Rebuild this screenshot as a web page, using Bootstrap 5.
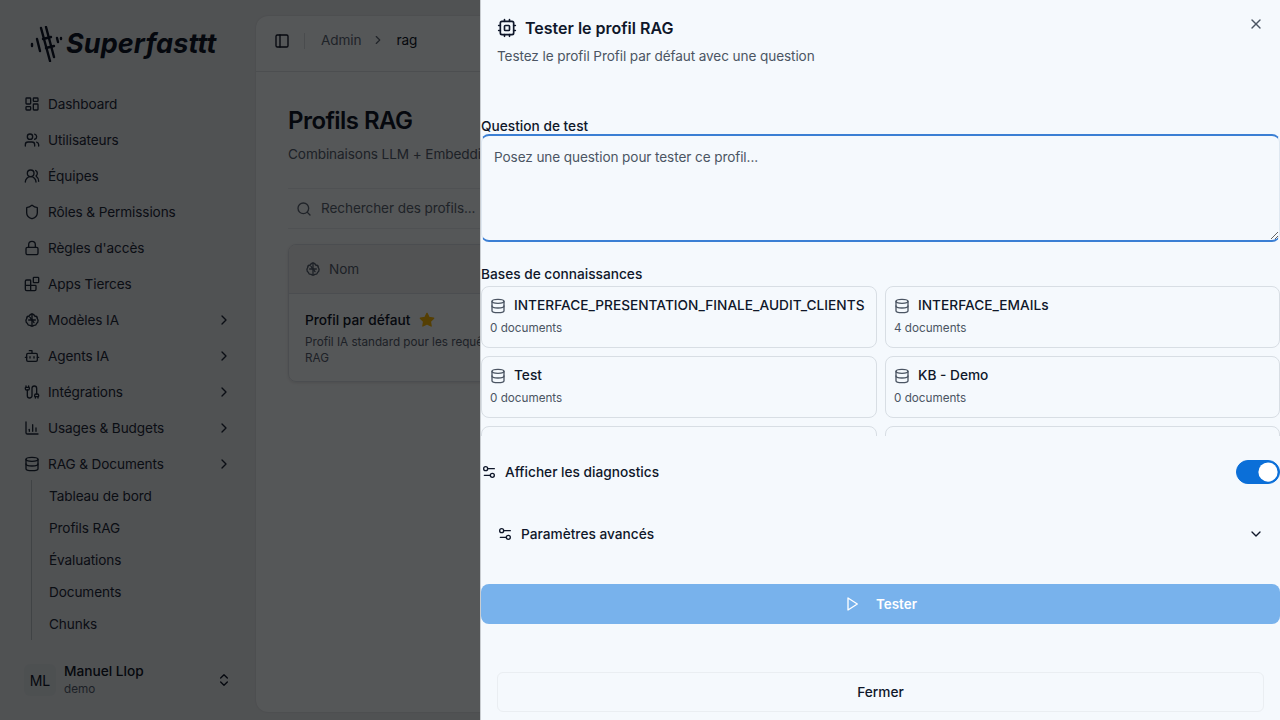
<!DOCTYPE html>
<html lang="fr">

<head>
  <meta charset="UTF-8">
  <title>Profils RAG</title>
  <link href="https://cdn.jsdelivr.net/npm/bootstrap@5.3.2/dist/css/bootstrap.min.css" rel="stylesheet">
  <style>
    body { font-family: Inter, "Liberation Sans", sans-serif; font-size: 13.6px; letter-spacing: -.1px; color: #0f172a; background: #e6ebef; height: 720px; overflow: hidden; }
    .ico { width: 16px; height: 16px; fill: none; stroke: currentColor; stroke-width: 2; stroke-linecap: round; stroke-linejoin: round; flex-shrink: 0; }
    .ico-14 { width: 14px; height: 14px; }
    .ico-20 { width: 20px; height: 20px; }
    .dim { position: fixed; inset: 0; z-index: 1040; background: rgba(0, 0, 0, .3); backdrop-filter: blur(.5px); }

    /* sidebar */
    .sidebar { width: 256px; height: 720px; padding: 0 24px; }
    .logo { height: 86px; padding-top: 26px; margin-left: 5px; gap: 3px; }
    .logo-mark { width: 34px; height: 36px; fill: none; stroke: #0f172a; stroke-width: 2.4; stroke-linecap: round; }
    .logo-text { font-size: 27px; font-weight: 700; font-style: italic; line-height: 36px; letter-spacing: .1px; }
    .side-link { height: 36px; gap: 8px; color: #1e293b; text-decoration: none; }
    .side-link .chev { margin-left: auto; }
    .side-sub { border-left: 1px solid #b9c0c7; margin-left: 7px; margin-top: -2px; padding-left: 17px; height: 160px; }
    .side-sub a { height: 32px; color: #1e293b; text-decoration: none; }
    .side-user { margin-top: 22px; gap: 8px; }
    .avatar { width: 32px; height: 32px; background: #dfe5ea; border-radius: 6px; font-size: 14px; }
    .side-user .name { font-size: 13.7px; letter-spacing: 0; font-weight: 500; line-height: 18px; }
    .side-user .role { font-size: 11.7px; letter-spacing: 0; color: #556070; line-height: 18px; }

    /* main panel behind the drawer */
    .main-panel { width: 1024px; height: 696px; margin-top: 16px; background: #f5f9fc; border-radius: 12px 0 0 12px; box-shadow: 0 0 2px rgba(0, 0, 0, .12); }
    .top-bar { height: 56px; padding: 0 18px 6px; border-bottom: 1px solid #dbe1e7; gap: 14px; }
    .top-bar .sep { width: 1px; height: 16px; background: #d5dbe1; }
    .crumbs { gap: 10px; margin-left: 2px; color: #5b6675; }
    .crumbs .here { color: #0f172a; margin-left: 1px; }
    .page { padding: 33px 32px; }
    .page h1 { font-size: 24px; font-weight: 600; line-height: 32px; letter-spacing: -.55px; margin: 0; }
    .page .lead-txt { color: #556070; margin: 7px 0 0; line-height: 20px; }
    .search-box { height: 41px; margin-top: 24px; padding-left: 8px; gap: 9px; color: #5b6675; border-top: 1px solid #e4e9ee; border-bottom: 1px solid #e4e9ee; }
    .table-card { margin-top: 15px; width: 400px; height: 138px; border: 1px solid #d9dfe5; border-radius: 8px; box-shadow: 0 1px 3px rgba(0, 0, 0, .1); overflow: hidden; }
    .table-head { height: 49px; padding: 0 16px; gap: 8px; background: #eceff2; border-bottom: 1px solid #d9dfe5; color: #556070; }
    .table-row { padding: 16px; }
    .table-row .nm { font-size: 13.7px; letter-spacing: 0; font-weight: 500; line-height: 20px; gap: 9px; }
    .table-row .star { fill: #f5b60a; stroke: #f5b60a; }
    .table-row .dsc { font-size: 11.7px; letter-spacing: 0; line-height: 16px; color: #556070; margin-top: 4px; width: 196px; }

    /* drawer */
    .drawer.offcanvas { width: 800px; background: #f5f9fd; border-left: 1px solid #c9cdd1; color: #0f172a; overflow: hidden; }
    .drawer-head { padding: 16px; height: 82px; }
    .drawer-title { font-size: 16px; font-weight: 600; letter-spacing: 0; line-height: 24px; gap: 8px; }
    .drawer-sub { color: #4b5563; line-height: 20px; margin-top: 6px; }
    .drawer .close-x { top: 16px; right: 16px; color: #4b5563; background: none; border: 0; padding: 0; line-height: 0; }
    .fld-label { font-size: 13.7px; letter-spacing: 0; font-weight: 500; line-height: 17px; margin: 0; display: block; }
    .first-label { margin-top: 36px; line-height: 16px; }
    .drawer textarea.form-control { height: 108px; font-size: 13.6px; letter-spacing: -.1px; line-height: 20px; padding: 11px 12px; background: #f5f9fd; border: 2px solid #3b7fd4; border-left: 1px solid #dfe8f1; border-right: 1px solid #dfe8f1; border-radius: 8px; box-shadow: none; color: #0f172a; }
    .drawer textarea.form-control::placeholder { color: #4b5563; opacity: 1; }
    .second-label { margin-top: 24px; }
    .kb-wrap { height: 150px; margin-top: 3px; overflow: hidden; display: grid; grid-template-columns: 396px 395px; gap: 8px; }
    .kb-card { height: 62px; padding: 10px 8px; background: #f5f9fd; border: 1px solid #d8dee4; border-radius: 8px; }
    .kb-card .kb-t { font-size: 13.7px; letter-spacing: 0; font-weight: 500; line-height: 17px; gap: 8px; }
    .kb-card .kb-t .ico { color: #4b5563; }
    .kb-card .kb-d { font-size: 11.7px; letter-spacing: 0; line-height: 16px; color: #4b5563; margin-top: 6px; }
    .diag-row { font-size: 13.7px; letter-spacing: 0; height: 24px; margin-top: 24px; gap: 8px; font-weight: 500; }
    .diag-row .form-switch { margin: 0 0 0 auto; padding: 0; min-height: 0; line-height: 0; }
    .diag-row .form-check-input { width: 44px; height: 24px; margin: 0; background-color: #0b6fd8; border-color: #0b6fd8; box-shadow: none; background-image: url("data:image/svg+xml,%3csvg xmlns='http://www.w3.org/2000/svg' viewBox='-4 -4 8 8'%3e%3ccircle r='3.5' fill='%23fff'/%3e%3c/svg%3e"); }
    .adv-row { font-size: 13.7px; letter-spacing: 0; height: 40px; margin-top: 30px; padding: 0 16px; gap: 8px; font-weight: 500; }
    .btn-test.btn { height: 40px; margin-top: 30px; width: 799px; font-size: 13.4px; letter-spacing: 0; font-weight: 600; gap: 16px; color: #fff; background: #78b2ec; border: 0; border-radius: 8px; opacity: 1; }
    .drawer-foot { margin-top: 48px; padding: 0 16px; }
    .btn-close-foot.btn { height: 40px; width: 100%; font-size: 13.7px; letter-spacing: 0; font-weight: 500; color: #0f172a; background: #f5f9fd; border: 1px solid #eaeef2; border-radius: 6px; }
  </style>
</head>

<body>
  <svg class="d-none">
    <symbol id="i-dash" viewBox="0 0 24 24"><rect x="3" y="3" width="7" height="9" rx="1"/><rect x="14" y="3" width="7" height="5" rx="1"/><rect x="14" y="12" width="7" height="9" rx="1"/><rect x="3" y="16" width="7" height="5" rx="1"/></symbol>
    <symbol id="i-users" viewBox="0 0 24 24"><path d="M16 21v-2a4 4 0 0 0-4-4H6a4 4 0 0 0-4 4v2"/><circle cx="9" cy="7" r="4"/><path d="M22 21v-2a4 4 0 0 0-3-3.87"/><path d="M16 3.13a4 4 0 0 1 0 7.75"/></symbol>
    <symbol id="i-team" viewBox="0 0 24 24"><path d="M18 21a8 8 0 0 0-16 0"/><circle cx="10" cy="8" r="5"/><path d="M22 20c0-3.37-2-6.5-4-8a5 5 0 0 0-.45-8.3"/></symbol>
    <symbol id="i-shield" viewBox="0 0 24 24"><path d="M20 13c0 5-3.5 7.5-7.66 8.95a1 1 0 0 1-.67-.01C7.5 20.5 4 18 4 13V6a1 1 0 0 1 1-1c2 0 4.5-1.2 6.24-2.72a1.17 1.17 0 0 1 1.52 0C14.51 3.81 17 5 19 5a1 1 0 0 1 1 1z"/></symbol>
    <symbol id="i-lock" viewBox="0 0 24 24"><rect x="3" y="11" width="18" height="11" rx="2"/><path d="M7 11V7a5 5 0 0 1 10 0v4"/></symbol>
    <symbol id="i-blocks" viewBox="0 0 24 24"><path d="M10 22V7a1 1 0 0 0-1-1H4a2 2 0 0 0-2 2v12a2 2 0 0 0 2 2h12a2 2 0 0 0 2-2v-5a1 1 0 0 0-1-1H2"/><rect x="14" y="2" width="8" height="8" rx="1"/></symbol>
    <symbol id="i-brain" viewBox="0 0 24 24"><path d="M12 3v18"/><path d="M12 3a4 4 0 0 0-4 3 4 4 0 0 0-4 4 4 4 0 0 0-1 3 4 4 0 0 0 2 4 4 4 0 0 0 4 3 4 4 0 0 0 3 1 4 4 0 0 0 3-1 4 4 0 0 0 4-3 4 4 0 0 0 2-4 4 4 0 0 0-1-3 4 4 0 0 0-4-4 4 4 0 0 0-4-3z"/><path d="M7 12h5l-3-4"/><path d="M17 12h-5l3 4"/></symbol>
    <symbol id="i-bot" viewBox="0 0 24 24"><path d="M12 8V4H8"/><rect x="4" y="8" width="16" height="12" rx="2"/><path d="M2 14h2"/><path d="M20 14h2"/><path d="M15 13v2"/><path d="M9 13v2"/></symbol>
    <symbol id="i-cable" viewBox="0 0 24 24"><path d="M17 21v-2a1 1 0 0 1-1-1v-1a2 2 0 0 1 2-2h2a2 2 0 0 1 2 2v1a1 1 0 0 1-1 1"/><path d="M19 15V6.5a1 1 0 0 0-7 0v11a1 1 0 0 1-7 0V9"/><path d="M21 21v-2h-4"/><path d="M3 5h4V3"/><path d="M7 5a1 1 0 0 1 1 1v1a2 2 0 0 1-2 2H4a2 2 0 0 1-2-2V6a1 1 0 0 1 1-1V3"/></symbol>
    <symbol id="i-chart" viewBox="0 0 24 24"><path d="M3 3v16a2 2 0 0 0 2 2h16"/><path d="M18 17v-5"/><path d="M13 17V7"/><path d="M8 17v-3"/></symbol>
    <symbol id="i-db" viewBox="0 0 24 24"><ellipse cx="12" cy="5" rx="9" ry="3"/><path d="M3 5V19A9 3 0 0 0 21 19V5"/><path d="M3 12A9 3 0 0 0 21 12"/></symbol>
    <symbol id="i-right" viewBox="0 0 24 24"><path d="m9 18 6-6-6-6"/></symbol>
    <symbol id="i-down" viewBox="0 0 24 24"><path d="m6 9 6 6 6-6"/></symbol>
    <symbol id="i-updown" viewBox="0 0 24 24"><path d="m7 15 5 5 5-5"/><path d="m7 9 5-5 5 5"/></symbol>
    <symbol id="i-panel" viewBox="0 0 24 24"><rect x="3" y="3" width="18" height="18" rx="2"/><path d="M9 3v18"/></symbol>
    <symbol id="i-search" viewBox="0 0 24 24"><circle cx="11" cy="11" r="8"/><path d="m21 21-4.3-4.3"/></symbol>
    <symbol id="i-cpu" viewBox="0 0 24 24"><rect x="4" y="4" width="16" height="16" rx="2"/><rect x="9" y="9" width="6" height="6" rx="1"/><path d="M15 2v2M15 20v2M2 15h2M2 9h2M20 15h2M20 9h2M9 2v2M9 20v2"/></symbol>
    <symbol id="i-sliders" viewBox="0 0 24 24"><path d="M20 7h-9"/><path d="M14 17H5"/><circle cx="17" cy="17" r="3"/><circle cx="7" cy="7" r="3"/></symbol>
    <symbol id="i-play" viewBox="0 0 24 24"><polygon points="6 3 20 12 6 21 6 3"/></symbol>
    <symbol id="i-x" viewBox="0 0 24 24"><path d="M18 6 6 18"/><path d="m6 6 12 12"/></symbol>
    <symbol id="i-star" viewBox="0 0 24 24"><polygon points="12 2 15.1 8.3 22 9.3 17 14.1 18.2 21 12 17.8 5.8 21 7 14.1 2 9.3 8.9 8.3"/></symbol>
  </svg>

  <div class="d-flex">
    <!-- barre laterale -->
    <aside class="sidebar d-flex flex-column">
      <div class="logo d-flex align-items-start">
        <svg class="logo-mark" viewBox="0 0 34 36">
          <path d="M3 18v2"/><path d="M8 13l3 12"/><path d="M12 2l9 33"/><path d="M17 1l8 30"/><path d="M14 13l8-2"/><path d="M17 22l8-2"/><path d="M28 12l1 4"/><path d="M32 12v1"/>
        </svg>
        <span class="logo-text">Superfasttt</span>
      </div>
      <nav class="d-flex flex-column">
        <a class="side-link d-flex align-items-center" href="#"><svg class="ico"><use href="#i-dash"/></svg>Dashboard</a>
        <a class="side-link d-flex align-items-center" href="#"><svg class="ico"><use href="#i-users"/></svg>Utilisateurs</a>
        <a class="side-link d-flex align-items-center" href="#"><svg class="ico"><use href="#i-team"/></svg>Équipes</a>
        <a class="side-link d-flex align-items-center" href="#"><svg class="ico"><use href="#i-shield"/></svg>Rôles &amp; Permissions</a>
        <a class="side-link d-flex align-items-center" href="#"><svg class="ico"><use href="#i-lock"/></svg>Règles d'accès</a>
        <a class="side-link d-flex align-items-center" href="#"><svg class="ico"><use href="#i-blocks"/></svg>Apps Tierces</a>
        <a class="side-link d-flex align-items-center" href="#"><svg class="ico"><use href="#i-brain"/></svg>Modèles IA<svg class="ico chev"><use href="#i-right"/></svg></a>
        <a class="side-link d-flex align-items-center" href="#"><svg class="ico"><use href="#i-bot"/></svg>Agents IA<svg class="ico chev"><use href="#i-right"/></svg></a>
        <a class="side-link d-flex align-items-center" href="#"><svg class="ico"><use href="#i-cable"/></svg>Intégrations<svg class="ico chev"><use href="#i-right"/></svg></a>
        <a class="side-link d-flex align-items-center" href="#"><svg class="ico"><use href="#i-chart"/></svg>Usages &amp; Budgets<svg class="ico chev"><use href="#i-right"/></svg></a>
        <a class="side-link d-flex align-items-center" href="#"><svg class="ico"><use href="#i-db"/></svg>RAG &amp; Documents<svg class="ico chev"><use href="#i-right"/></svg></a>
        <div class="side-sub d-flex flex-column">
          <a class="d-flex align-items-center" href="#">Tableau de bord</a>
          <a class="d-flex align-items-center" href="#">Profils RAG</a>
          <a class="d-flex align-items-center" href="#">Évaluations</a>
          <a class="d-flex align-items-center" href="#">Documents</a>
          <a class="d-flex align-items-center" href="#">Chunks</a>
        </div>
      </nav>
      <div class="side-user d-flex align-items-center">
        <div class="avatar d-flex align-items-center justify-content-center">ML</div>
        <div class="flex-grow-1">
          <div class="name">Manuel Llop</div>
          <div class="role">demo</div>
        </div>
        <svg class="ico"><use href="#i-updown"/></svg>
      </div>
    </aside>

    <!-- contenu principal -->
    <main class="main-panel">
      <div class="top-bar d-flex align-items-center">
        <svg class="ico"><use href="#i-panel"/></svg>
        <span class="sep"></span>
        <div class="crumbs d-flex align-items-center">
          <span>Admin</span>
          <svg class="ico ico-14"><use href="#i-right"/></svg>
          <span class="here">rag</span>
        </div>
      </div>
      <div class="page">
        <h1>Profils RAG</h1>
        <p class="lead-txt">Combinaisons LLM + Embedding pour le RAG</p>
        <div class="search-box d-flex align-items-center">
          <svg class="ico"><use href="#i-search"/></svg>
          <span>Rechercher des profils...</span>
        </div>
        <div class="table-card">
          <div class="table-head d-flex align-items-center">
            <svg class="ico"><use href="#i-brain"/></svg>Nom
          </div>
          <div class="table-row">
            <div class="nm d-flex align-items-center">Profil par défaut <svg class="ico star"><use href="#i-star"/></svg></div>
            <div class="dsc">Profil IA standard pour les requêtes RAG</div>
          </div>
        </div>
      </div>
    </main>
  </div>

  <div class="dim"></div>

  <!-- panneau de test -->
  <div class="drawer offcanvas offcanvas-end show">
    <div class="drawer-head">
      <div class="drawer-title d-flex align-items-center"><svg class="ico ico-20"><use href="#i-cpu"/></svg>Tester le profil RAG</div>
      <div class="drawer-sub">Testez le profil Profil par défaut avec une question</div>
      <button class="close-x position-absolute" type="button"><svg class="ico"><use href="#i-x"/></svg></button>
    </div>

    <label class="fld-label first-label">Question de test</label>
    <textarea class="form-control" placeholder="Posez une question pour tester ce profil..."></textarea>

    <label class="fld-label second-label">Bases de connaissances</label>
    <div class="kb-wrap">
      <div class="kb-card">
        <div class="kb-t d-flex align-items-center"><svg class="ico"><use href="#i-db"/></svg>INTERFACE_PRESENTATION_FINALE_AUDIT_CLIENTS</div>
        <div class="kb-d">0 documents</div>
      </div>
      <div class="kb-card">
        <div class="kb-t d-flex align-items-center"><svg class="ico"><use href="#i-db"/></svg>INTERFACE_EMAILs</div>
        <div class="kb-d">4 documents</div>
      </div>
      <div class="kb-card">
        <div class="kb-t d-flex align-items-center"><svg class="ico"><use href="#i-db"/></svg>Test</div>
        <div class="kb-d">0 documents</div>
      </div>
      <div class="kb-card">
        <div class="kb-t d-flex align-items-center"><svg class="ico"><use href="#i-db"/></svg>KB - Demo</div>
        <div class="kb-d">0 documents</div>
      </div>
      <div class="kb-card"></div>
      <div class="kb-card"></div>
    </div>

    <div class="diag-row d-flex align-items-center">
      <svg class="ico"><use href="#i-sliders"/></svg>Afficher les diagnostics
      <div class="form-check form-switch"><input class="form-check-input" type="checkbox" role="switch" checked></div>
    </div>

    <div class="adv-row d-flex align-items-center">
      <svg class="ico"><use href="#i-sliders"/></svg>Paramètres avancés
      <svg class="ico ms-auto"><use href="#i-down"/></svg>
    </div>

    <button class="btn btn-test d-flex align-items-center justify-content-center" type="button"><svg class="ico"><use href="#i-play"/></svg>Tester</button>

    <div class="drawer-foot">
      <button class="btn btn-close-foot" type="button">Fermer</button>
    </div>
  </div>

  <script src="https://cdn.jsdelivr.net/npm/bootstrap@5.3.2/dist/js/bootstrap.bundle.min.js"></script>
</body>

</html>
